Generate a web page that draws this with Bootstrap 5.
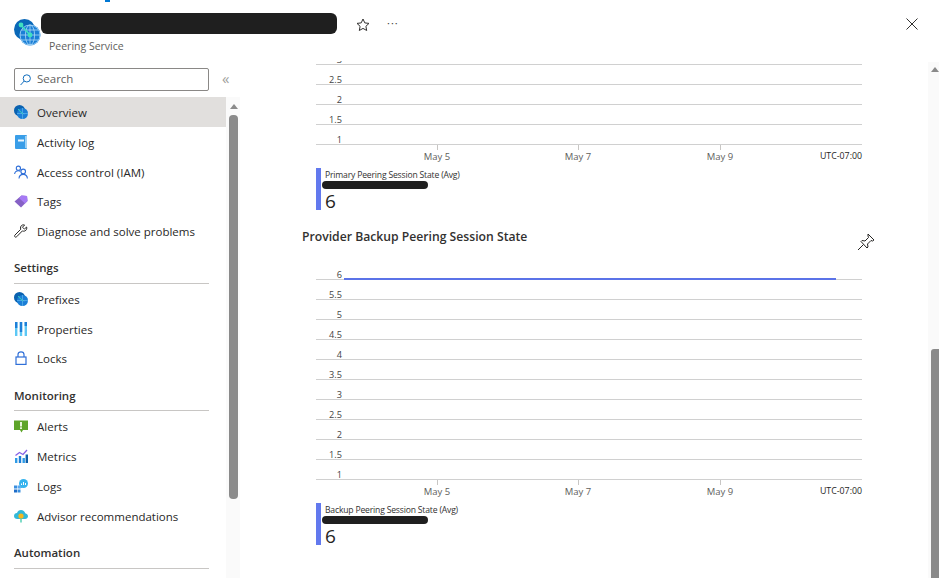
<!DOCTYPE html>
<html lang="en">
<head>
  <meta charset="UTF-8">
  <meta name="viewport" content="width=device-width, initial-scale=1.0">
  <title>Peering Service</title>
  <link href="https://cdn.jsdelivr.net/npm/bootstrap@5.3.0/dist/css/bootstrap.min.css" rel="stylesheet">
  <style>
    html, body {
      height: 100%;
      overflow: hidden;
    }
    body {
      font-family: "Open Sans", "Noto Sans", sans-serif;
      font-size: 12px;
      color: #292827;
      background: #fff;
    }
    .blade {
      height: 578px;
      position: relative;
    }
    .crumb-bit {
      position: absolute;
      left: 105px;
      top: 0;
      width: 5px;
      height: 2px;
      background: #0078d4;
    }
    .scribble {
      background: #1f1f1f;
      border-radius: 6px;
    }

    /* header */
    .blade-head {
      height: 62px;
      padding-left: 14px;
    }
    .head-logo {
      margin-top: 19px;
      flex: 0 0 27px;
    }
    .head-titles {
      width: 296px;
      padding-top: 13px;
    }
    .head-titles .scribble {
      height: 21px;
    }
    .head-sub {
      font-size: 10.5px;
      color: #605e5c;
      margin: 5px 0 0 8px;
      line-height: 14px;
    }
    .head-star {
      margin: 18px 0 0 19px;
    }
    .head-more {
      margin: 16px 0 0 17px;
      line-height: 14px;
      letter-spacing: 1px;
      font-size: 11px;
      color: #444;
    }
    .head-close {
      margin: 18px 21px 0 auto;
    }

    /* left menu */
    .side {
      flex: 0 0 240px;
      height: 516px;
    }
    .search-row {
      height: 35px;
      padding: 6px 0 0 14px;
    }
    .search-box {
      width: 195px;
      height: 23px;
      border: 1px solid #8a8886;
      border-radius: 2px;
      padding-left: 5px;
      gap: 6px;
      color: #605e5c;
      font-size: 11.5px;
    }
    .search-box span {
      padding-bottom: 2px;
    }
    .collapse-mark {
      margin-left: 13px;
      margin-top: -1px;
      font-size: 15px;
      line-height: 23px;
      color: #a19f9d;
    }
    .menu-pane {
      height: 481px;
      overflow: hidden;
    }
    .menu-list {
      flex: 0 0 226px;
    }
    .menu-item {
      height: 30px;
      padding: 2px 0 0 14px;
      gap: 9px;
      color: #292827;
      font-size: 11.5px;
    }
    .menu-item.is-on {
      background: #e1dfdd;
    }
    .menu-item.tight {
      height: 29px;
    }
    .menu-icon {
      flex: 0 0 14px;
      width: 14px;
      height: 14px;
      margin-top: -2px;
    }
    .menu-group {
      margin: 7px 17px 0 14px;
      border-bottom: 1px solid #c8c6c4;
      font-weight: 600;
      font-size: 11.5px;
      height: 31px;
      line-height: 16px;
      padding-top: 7px;
      color: #323130;
    }
    .menu-group.is-short {
      margin-top: 8px;
      height: 30px;
    }
    .menu-track {
      flex: 0 0 14px;
      background: #fafafa;
      padding: 0 2px 0 3px;
    }
    .track-arrow {
      width: 0;
      height: 0;
      margin: 7px auto 6px;
      border-left: 4px solid transparent;
      border-right: 4px solid transparent;
      border-bottom: 5px solid #8a8a8a;
    }
    .track-thumb {
      height: 384px;
      background: #8a8a8a;
      border-radius: 4px;
    }

    /* chart side */
    .main-pane {
      height: 517px;
      margin-top: -1px;
      overflow: hidden;
    }
    .page-track {
      flex: 0 0 8px;
      background: #fafafa;
    }
    .page-arrow {
      width: 0;
      height: 0;
      margin: 5px 0 0 3px;
      border-left: 4px solid transparent;
      border-right: 4px solid transparent;
      border-bottom: 5px solid #8a8a8a;
    }
    .page-thumb {
      margin: 277px 0 0 3px;
      height: 229px;
      background: #8a8a8a;
      border-radius: 3px 0 0 0;
    }
    .chart-body {
      width: 573px;
      margin-left: 62px;
    }
    .chart-first {
      margin-top: -16px;
    }
    .chart-title {
      height: 42px;
      margin-top: 17px;
      font-size: 12.2px;
      font-weight: 600;
      line-height: 20px;
      color: #323130;
    }
    .chart-pin {
      margin: 6px 0 0 0;
    }
    .plot {
      margin-left: 14px;
      width: 546px;
      position: relative;
    }
    .plot-row {
      display: flex;
      align-items: flex-end;
      height: 20px;
      border-bottom: 1px solid #d0d0d0;
      font-size: 9.2px;
      line-height: 11px;
      width: 546px;
    }
    .plot-row.is-top {
      height: 11px;
    }
    .plot-row span {
      display: block;
      width: 26px;
      margin-bottom: -1px;
      text-align: right;
      color: #444;
    }
    .plot-line {
      position: absolute;
      left: 28px;
      top: 9px;
      width: 492px;
      height: 2px;
      background: #5b73e8;
    }
    .x-axis {
      display: grid;
      grid-template-columns: 91px 60px 81px 60px 82px 60px 1fr;
      margin-left: 14px;
      width: 546px;
      height: 23px;
      font-size: 9.5px;
      color: #605e5c;
      text-align: center;
      line-height: 13px;
      padding-top: 5px;
    }
    .x-tick {
      position: relative;
    }
    .x-tick::before {
      content: "";
      position: absolute;
      left: 50%;
      top: -5px;
      height: 5px;
      border-left: 1px solid #c8c6c4;
    }
    .x-zone {
      text-align: right;
      color: #252423;
      font-size: 8.8px;
      white-space: nowrap;
    }
    .legend {
      margin-left: 14px;
      height: 42px;
      border-left: 5px solid #6279ee;
      padding: 1px 0 0 4px;
    }
    .legend-name {
      font-size: 8.6px;
      letter-spacing: -0.18px;
      line-height: 12px;
      color: #323130;
      white-space: nowrap;
    }
    .legend-blot {
      width: 106px;
      height: 8px;
      margin-left: -3px;
    }
    .legend-val {
      font-size: 19px;
      font-weight: 500;
      line-height: 22px;
      margin-top: 1px;
      color: #252423;
    }
  </style>
</head>
<body>
  <svg width="0" height="0" class="position-absolute">
    <defs>
      <symbol id="ico-globe" viewBox="0 0 27 27">
        <circle cx="10.5" cy="10.5" r="10.5" fill="#0a68b8"/>
        <circle cx="16" cy="16" r="10.5" fill="#1b7fd6"/>
        <g fill="none" stroke="#a9d8f8" stroke-width="0.8">
          <circle cx="16" cy="16" r="10"/>
          <ellipse cx="16" cy="16" rx="4.6" ry="10"/>
          <path d="M16 6v20M6 16h20M7.500 11h17M7.500 21h17"/>
        </g>
        <path d="M7 6l9 10" stroke="#3fe0c0" stroke-width="1.600"/>
        <circle cx="7" cy="6" r="2.400" fill="#3fe0c0"/>
        <circle cx="16" cy="16" r="2.400" fill="#3fe0c0"/>
      </symbol>
      <symbol id="ico-globe-sm" viewBox="0 0 14 14">
        <circle cx="5.500" cy="5.500" r="5.500" fill="#0a62b0"/>
        <circle cx="8.500" cy="8.500" r="5.500" fill="#1b7fd6"/>
        <path d="M5 4.500c1 2.500 3 4 5.500 4.500M8.500 3v11M3 8.500h11" fill="none" stroke="#5fb4ee" stroke-width="0.700"/>
        <path d="M4 4l5 5" stroke="#30c8b8" stroke-width="1"/>
      </symbol>
    </defs>
  </svg>

  <div class="blade">
    <div class="crumb-bit"></div>

    <div class="blade-head d-flex">
      <svg class="head-logo" width="27" height="27"><use href="#ico-globe"/></svg>
      <div class="head-titles">
        <div class="scribble"></div>
        <div class="head-sub">Peering Service</div>
      </div>
      <svg class="head-star" width="14" height="14" viewBox="0 0 14 14" fill="none" stroke="#323130" stroke-width="1"><path d="M7 1l1.800 3.900 4.200.5-3.100 2.900.8 4.200L7 10.400l-3.700 2.100.8-4.200L1 5.400l4.200-.5z"/></svg>
      <div class="head-more">···</div>
      <svg class="head-close" width="12" height="12" viewBox="0 0 12 12" stroke="#323130" stroke-width="1"><path d="M.5.5l11 11M11.500.5l-11 11"/></svg>
    </div>

    <div class="d-flex">
      <div class="side">
        <div class="search-row d-flex">
          <div class="search-box d-flex align-items-center">
            <svg width="11" height="12" viewBox="0 0 11 12" fill="none" stroke="#0f6cbd" stroke-width="1"><circle cx="6.800" cy="4.400" r="3.600"/><path d="M4.200 7L.6 11"/></svg>
            <span>Search</span>
          </div>
          <div class="collapse-mark">«</div>
        </div>
        <div class="menu-pane d-flex">
          <div class="menu-list">
            <div class="menu-item is-on d-flex align-items-center">
              <svg class="menu-icon"><use href="#ico-globe-sm"/></svg>Overview
            </div>
            <div class="menu-item d-flex align-items-center">
              <svg class="menu-icon" viewBox="0 0 14 14"><rect x="1" y="0" width="12" height="14" rx="1" fill="#3a9ee8"/><rect x="11" y="1" width="2" height="12" fill="#9fd2f4"/><rect x="4" y="4.500" width="6" height="2" fill="#eaf5fd"/></svg>Activity log
            </div>
            <div class="menu-item tight d-flex align-items-center">
              <svg class="menu-icon" viewBox="0 0 14 14" fill="none" stroke="#2f6fd8" stroke-width="1.100"><circle cx="4.400" cy="3.200" r="2.100"/><path d="M.6 9c.3-2.400 1.800-3.300 3.800-3.300.8 0 1.400.1 2 .5"/><circle cx="9.200" cy="6.400" r="2.300"/><path d="M5 13.500c.2-2.800 2-4.100 4.200-4.100s4 1.300 4.200 4.100"/></svg>Access control (IAM)
            </div>
            <div class="menu-item d-flex align-items-center">
              <svg class="menu-icon" viewBox="0 0 14 14"><path d="M.5 7.500L7.500 1.500l5.500.5.5 5-6.500 6.500z" fill="#8661c5"/><path d="M7.500 1.500l5.500.5.5 5-2.500 2.500L5 4z" fill="#a67af4"/></svg>Tags
            </div>
            <div class="menu-item d-flex align-items-center">
              <svg class="menu-icon" viewBox="0 0 14 14" fill="none" stroke="#292827" stroke-width="1"><path d="M9.500.8c-1.800 0-3.100 1.500-3 3.200 0 .5.100.9.300 1.200L1 11c-.6.600-.6 1.300-.1 1.800s1.200.5 1.800-.1l5.700-5.800c.4.200.8.300 1.200.3 1.800 0 3.200-1.400 3.200-3.100 0-.4-.1-.8-.2-1.100l-2.200 2.100-1.900-1.900L10.600 1c-.3-.1-.7-.2-1.100-.2z"/></svg>Diagnose and solve problems
            </div>

            <div class="menu-group">Settings</div>
            <div class="menu-item d-flex align-items-center">
              <svg class="menu-icon"><use href="#ico-globe-sm"/></svg>Prefixes
            </div>
            <div class="menu-item tight d-flex align-items-center">
              <svg class="menu-icon" viewBox="0 0 14 14"><rect x="1" y="0" width="2.400" height="14" fill="#5cc8f5"/><rect x="1" y="0" width="2.400" height="6" fill="#1d7fd8"/><rect x="5.800" y="0" width="2.400" height="14" fill="#5cc8f5"/><rect x="5.800" y="0" width="2.400" height="10" fill="#1d7fd8"/><rect x="10.600" y="0" width="2.400" height="14" fill="#5cc8f5"/><rect x="10.600" y="0" width="2.400" height="4" fill="#1d7fd8"/></svg>Properties
            </div>
            <div class="menu-item d-flex align-items-center">
              <svg class="menu-icon" viewBox="0 0 14 14" fill="none" stroke="#2f6fd8" stroke-width="1.200"><rect x="2" y="6" width="10" height="7.400"/><path d="M4 6V3.600C4 1.800 5.300.8 7 .8s3 1 3 2.800V6"/></svg>Locks
            </div>

            <div class="menu-group is-short">Monitoring</div>
            <div class="menu-item d-flex align-items-center">
              <svg class="menu-icon" viewBox="0 0 14 14"><path d="M0 1.500h14v9.500H9l-1.500 2.500L6 11H0z" fill="#5ea52a"/><rect x="6" y="3" width="2" height="4.500" fill="#e8f5dc"/><rect x="6" y="8.300" width="2" height="1.700" fill="#e8f5dc"/></svg>Alerts
            </div>
            <div class="menu-item d-flex align-items-center">
              <svg class="menu-icon" viewBox="0 0 14 14"><rect x="1" y="9" width="2.400" height="5" fill="#2f9be6"/><rect x="4.800" y="7" width="2.400" height="7" fill="#1d7fd8"/><rect x="8.500" y="9" width="2.400" height="5" fill="#2f9be6"/><rect x="11.600" y="5.500" width="2.400" height="8.500" fill="#0f5fa8"/><path d="M1.500 6.500L5.500 3.500 9 5.500 13 1" fill="none" stroke="#8661e5" stroke-width="1.300"/></svg>Metrics
            </div>
            <div class="menu-item d-flex align-items-center">
              <svg class="menu-icon" viewBox="0 0 14 14"><circle cx="9.500" cy="4.500" r="4.500" fill="#36b4ee"/><path d="M7 7.500l-1.500 2 3-1z" fill="#36b4ee"/><path d="M7.500 6V4.500M9.500 6V3M11.500 6V4" stroke="#fff" stroke-width="1"/><rect x="0" y="6.500" width="3" height="3" fill="#3a8fe0"/><rect x="3.500" y="6.500" width="3" height="3" fill="#5aa8ee"/><rect x="0" y="10.500" width="3" height="3" fill="#1d6cc8"/><rect x="3.500" y="10.500" width="3" height="3" fill="#3a8fe0"/></svg>Logs
            </div>
            <div class="menu-item d-flex align-items-center">
              <svg class="menu-icon" viewBox="0 0 14 14"><path d="M3.200 10C1.400 10 0 8.700 0 7s1.300-3 3-3c.6-2 2.200-3 4-3 2.100 0 3.800 1.400 4.200 3.200C12.800 4.500 14 5.700 14 7.200 14 8.800 12.700 10 11 10z" fill="#32b8d8"/><path d="M6 10h2v3.500H6z" fill="#7fdcc8"/><circle cx="7" cy="7" r="2.600" fill="#f5b81f"/></svg>Advisor recommendations
            </div>

            <div class="menu-group">Automation</div>
            <div class="menu-item d-flex align-items-center">
              <svg class="menu-icon" viewBox="0 0 14 14"><circle cx="7" cy="7" r="6" fill="#2f9be6"/></svg>
            </div>
          </div>
          <div class="menu-track">
            <div class="track-arrow"></div>
            <div class="track-thumb"></div>
          </div>
        </div>
      </div>

      <div class="main-pane flex-grow-1">
        <div class="chart-body chart-first">
          <div class="plot">
            <div class="plot-row"><span>3</span></div>
            <div class="plot-row"><span>2.5</span></div>
            <div class="plot-row"><span>2</span></div>
            <div class="plot-row"><span>1.5</span></div>
            <div class="plot-row"><span>1</span></div>
          </div>
          <div class="x-axis">
            <div></div><div class="x-tick">May 5</div><div></div><div class="x-tick">May 7</div><div></div><div class="x-tick">May 9</div><div class="x-zone">UTC-07:00</div>
          </div>
          <div class="legend">
            <div class="legend-name">Primary Peering Session State (Avg)</div>
            <div class="scribble legend-blot"></div>
            <div class="legend-val">6</div>
          </div>
        </div>

        <div class="chart-body">
          <div class="chart-title d-flex justify-content-between">
            <span>Provider Backup Peering Session State</span>
            <svg class="chart-pin" width="18" height="18" viewBox="0 0 18 18" fill="none" stroke="#252423" stroke-width="1"><path d="M11 1l6 6-1.500 1-1.500-.5-3.500 3.500.5 3-1 1L4 8.500l1-1 3 .5L11.500 4.500 11 3z"/><path d="M6.500 11.500L1 17"/></svg>
          </div>
          <div class="plot">
            <div class="plot-row is-top"><span>6</span></div>
            <div class="plot-row"><span>5.5</span></div>
            <div class="plot-row"><span>5</span></div>
            <div class="plot-row"><span>4.5</span></div>
            <div class="plot-row"><span>4</span></div>
            <div class="plot-row"><span>3.5</span></div>
            <div class="plot-row"><span>3</span></div>
            <div class="plot-row"><span>2.5</span></div>
            <div class="plot-row"><span>2</span></div>
            <div class="plot-row"><span>1.5</span></div>
            <div class="plot-row"><span>1</span></div>
            <div class="plot-line"></div>
          </div>
          <div class="x-axis">
            <div></div><div class="x-tick">May 5</div><div></div><div class="x-tick">May 7</div><div></div><div class="x-tick">May 9</div><div class="x-zone">UTC-07:00</div>
          </div>
          <div class="legend">
            <div class="legend-name">Backup Peering Session State (Avg)</div>
            <div class="scribble legend-blot"></div>
            <div class="legend-val">6</div>
          </div>
        </div>
      </div>

      <div class="page-track">
        <div class="page-arrow"></div>
        <div class="page-thumb"></div>
      </div>
    </div>
  </div>

  <script src="https://cdn.jsdelivr.net/npm/bootstrap@5.3.0/dist/js/bootstrap.bundle.min.js"></script>
</body>
</html>
